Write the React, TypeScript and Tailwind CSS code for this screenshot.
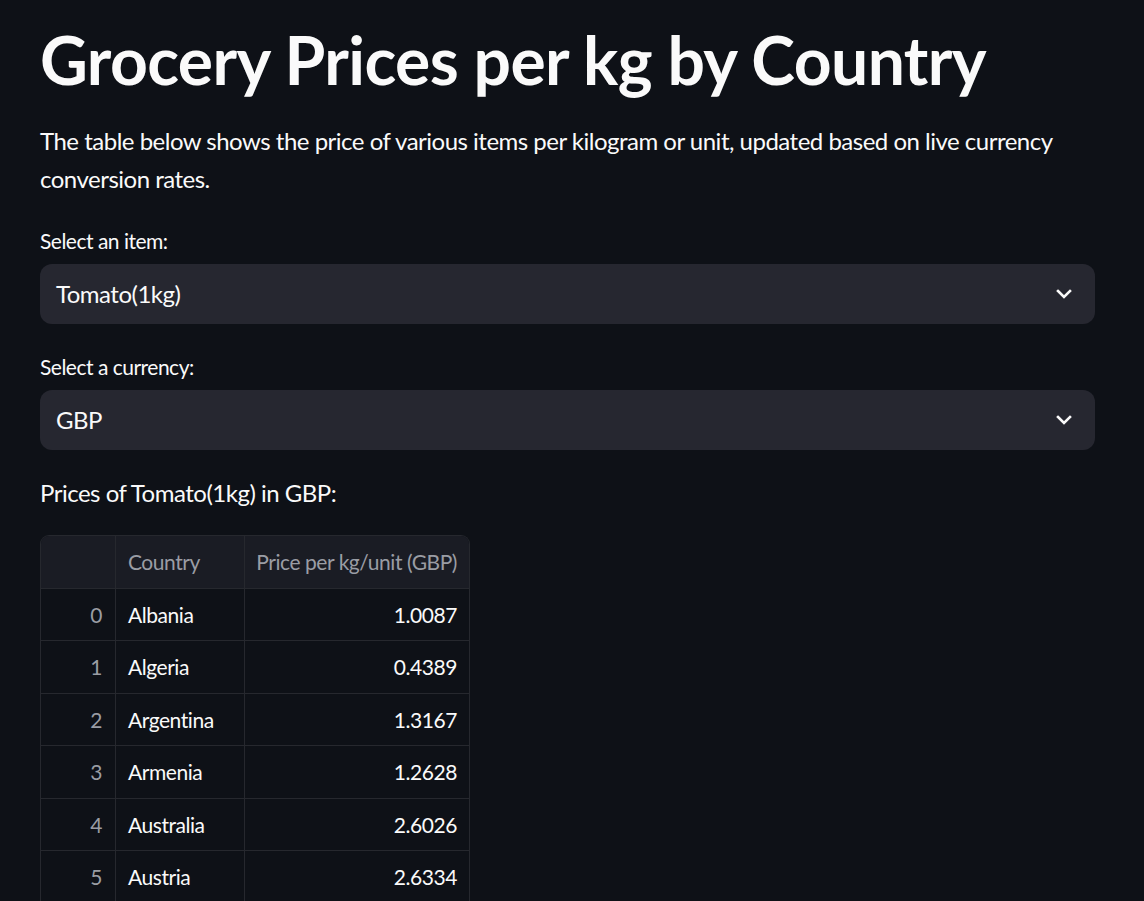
import React from "react";

const rows: [number, string, string][] = [
  [0, "Albania", "1.0087"],
  [1, "Algeria", "0.4389"],
  [2, "Argentina", "1.3167"],
  [3, "Armenia", "1.2628"],
  [4, "Australia", "2.6026"],
  [5, "Austria", "2.6334"],
];

function Chevron() {
  return (
    <svg width="20" height="20" viewBox="0 0 20 20" className="shrink-0">
      <polyline
        points="4,7 10,13 16,7"
        fill="none"
        stroke="#fafafa"
        strokeWidth="2.6"
        strokeLinecap="square"
      />
    </svg>
  );
}

function Select({ value }: { value: string }) {
  return (
    <div className="flex h-[60px] items-center justify-between rounded-[12px] bg-[#262730] pl-[16px] pr-[21px]">
      <span className="text-[24px] tracking-[-0.5px] text-[#fafafa]">{value}</span>
      <Chevron />
    </div>
  );
}

export default function App() {
  return (
    <div
      className="h-[901px] bg-[#0e1117] text-[#fafafa] overflow-hidden"
      style={{ fontFamily: "Lato, 'Noto Sans', sans-serif" }}
    >
      <div className="mx-[40px] w-[1055px] pt-[20px]">
        <h1 className="text-[66px] font-bold leading-[79px] tracking-[-0.6px]">
          Grocery Prices per kg by Country
        </h1>
        <p className="mt-[23px] text-[24px] leading-[38.4px] tracking-[-0.5px]">
          The table below shows the price of various items per kilogram or unit, updated based on live currency
          conversion rates.
        </p>
        <div className="mt-[27px] text-[21px] leading-[30px] tracking-[-0.5px]">Select an item:</div>
        <div className="mt-[8px]">
          <Select value="Tomato(1kg)" />
        </div>
        <div className="mt-[28px] text-[21px] leading-[30px] tracking-[-0.5px]">Select a currency:</div>
        <div className="mt-[8px]">
          <Select value="GBP" />
        </div>
        <div className="mt-[24px] text-[24px] leading-[38px] tracking-[-0.5px]">Prices of Tomato(1kg) in GBP:</div>
        <div className="mt-[23px] w-[430px] overflow-hidden rounded-t-[9px] border border-b-0 border-[#26282e] tracking-[-0.45px]">
          <div className="grid h-[52px] grid-cols-[75px_129px_224px] bg-[#1a1c24] text-[21px] text-[#9a9da4] whitespace-nowrap">
            <div className="border-r border-[#26282e]" />
            <div className="flex items-center border-r border-[#26282e] px-[12px]">Country</div>
            <div className="flex items-center justify-end px-[12px]">Price per kg/unit (GBP)</div>
          </div>
          {rows.map(([i, c, p]) => (
            <div
              key={i}
              className="grid h-[52.5px] grid-cols-[75px_129px_224px] border-t border-[#26282e] text-[21px]"
            >
              <div className="flex items-center justify-end border-r border-[#26282e] px-[13px] text-[#9a9da4]">
                {i}
              </div>
              <div className="flex items-center border-r border-[#26282e] px-[12px]">{c}</div>
              <div className="flex items-center justify-end px-[12px]">{p}</div>
            </div>
          ))}
        </div>
      </div>
    </div>
  );
}
